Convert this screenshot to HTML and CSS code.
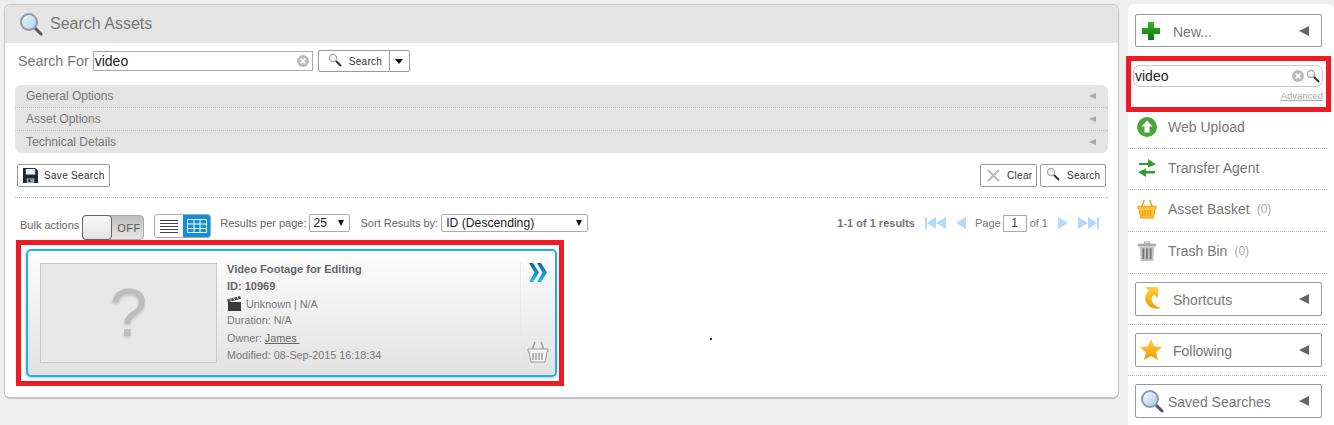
FILE: index.html
```html
<!DOCTYPE html>
<html lang="en">
<head>
    <meta charset="UTF-8">
    <title>Search Assets</title>
    <link rel="stylesheet" href="styles.css">
</head>
<body>
    <svg class="defs" width="0" height="0">
        <defs>
            <linearGradient id="lensFill" x1="0" y1="0" x2="1" y2="1">
                <stop offset="0" stop-color="#f4f9fd"/>
                <stop offset="1" stop-color="#a9cde8"/>
            </linearGradient>
            <linearGradient id="goldFill" x1="0" y1="0" x2="0" y2="1">
                <stop offset="0" stop-color="#ffd23c"/>
                <stop offset="1" stop-color="#f39a06"/>
            </linearGradient>
            <linearGradient id="greenFill" x1="0" y1="0" x2="0" y2="1">
                <stop offset="0" stop-color="#39b02d"/>
                <stop offset="1" stop-color="#087a08"/>
            </linearGradient>
            <linearGradient id="blueFill" x1="0" y1="0" x2="0" y2="1">
                <stop offset="0" stop-color="#0b62a8"/>
                <stop offset="1" stop-color="#21bdf0"/>
            </linearGradient>
            <symbol id="lens" viewBox="0 0 24 24">
                <path d="M15 15l7 7" stroke="#555" stroke-width="3" stroke-linecap="round"/>
                <circle cx="10" cy="10" r="8" fill="url(#lensFill)" stroke="#8c9aa6" stroke-width="2"/>
            </symbol>
            <symbol id="lens-small" viewBox="0 0 14 14">
                <circle cx="5" cy="5" r="3.6" fill="#f3f3f3" stroke="#aaa" stroke-width="1.2"/>
                <path d="M8 8l5 5" stroke="#333" stroke-width="2"/>
            </symbol>
            <symbol id="clear-dot" viewBox="0 0 12 12">
                <circle cx="6" cy="6" r="6" fill="#bbb"/>
                <path d="M3.6 3.6l4.8 4.8M8.4 3.6l-4.8 4.8" stroke="#fff" stroke-width="1.7"/>
            </symbol>
            <symbol id="basket" viewBox="0 0 22 22">
                <path d="M5 9L8 1M17 9L14 1" fill="none" stroke="currentColor" stroke-width="1.5"/>
                <path d="M1 8h20v2.500h-1l-2 10.500H4L2 10.500H1z" fill="var(--basket-fill)" stroke="currentColor" stroke-width="1"/>
                <path d="M6 12v7M9 12v7M12 12v7M15 12v7" stroke="currentColor" stroke-width="1.4" fill="none"/>
            </symbol>
        </defs>
    </svg>

    <div class="page">
        <main class="panel">
            <div class="panel-title">
                <svg class="title-icon"><use href="#lens"/></svg>
                <h1>Search Assets</h1>
            </div>

            <div class="search-row">
                <label class="search-label">Search For</label>
                <div class="search-input">
                    <span>video</span>
                    <svg class="clear-dot"><use href="#clear-dot"/></svg>
                </div>
                <div class="split-button">
                    <span class="button search-main"><svg class="small-lens"><use href="#lens-small"/></svg>Search</span>
                    <span class="button split-arrow"></span>
                </div>
            </div>

            <div class="options">
                <div class="option-row">General Options<i class="option-arrow"></i></div>
                <div class="option-row">Asset Options<i class="option-arrow"></i></div>
                <div class="option-row">Technical Details<i class="option-arrow"></i></div>
            </div>

            <div class="actions-row">
                <span class="button save-button">
                    <svg class="save-icon" viewBox="0 0 16 16">
                        <path d="M0 0h13l3 3v13H0z" fill="#1d2733"/>
                        <path d="M3 1h10v6H3z" fill="#eef1f4"/>
                        <path d="M4 11h8v5H4z" fill="#9aa2aa"/>
                        <path d="M6 12h2v3H6z" fill="#1d2733"/>
                    </svg>
                    Save Search
                </span>
                <div class="actions-right">
                    <span class="button clear-button">
                        <svg class="clear-x" viewBox="0 0 13 13"><path d="M1 1l11 11M12 1L1 12" stroke="#bbb" stroke-width="2.200"/></svg>
                        Clear
                    </span>
                    <span class="button search-small"><svg class="small-lens"><use href="#lens-small"/></svg>Search</span>
                </div>
            </div>

            <div class="toolbar">
                <span class="bulk-label">Bulk actions</span>
                <div class="toggle"><span class="toggle-knob"></span><span class="toggle-text">OFF</span></div>
                <div class="view-switch">
                    <span class="view-list">
                        <svg width="18" height="13" viewBox="0 0 18 13"><path d="M0 .5h18M0 3.500h18M0 6.500h18M0 9.500h18M0 12.500h18" stroke="#444"/></svg>
                    </span>
                    <span class="view-grid">
                        <svg width="20" height="14" viewBox="0 0 20 14"><path d="M.5.5h19v13H.5zM.5 5h19M.5 9.500h19M7 .5v13M13 .5v13" fill="none" stroke="#fff"/></svg>
                    </span>
                </div>
                <span class="tool-label per-page">Results per page:</span>
                <div class="select select-small">25<i class="select-arrow"></i></div>
                <span class="tool-label sort-by">Sort Results by:</span>
                <div class="select select-wide">ID (Descending)<i class="select-arrow"></i></div>

                <div class="pager">
                    <b class="pager-count">1-1 of 1 results</b>
                    <svg class="pager-jump" viewBox="0 0 21 12"><path d="M0 0h2v12H0zM2 6l9-6v12zM11 6l10-6v12z" fill="#b2d9fb"/></svg>
                    <svg class="pager-step pager-prev" viewBox="0 0 10 12"><path d="M0 6l10-6v12z" fill="#b2d9fb"/></svg>
                    <span class="pager-text">Page</span>
                    <span class="pager-box">1</span>
                    <span class="pager-text">of 1</span>
                    <svg class="pager-step" viewBox="0 0 10 12"><path d="M10 6L0 0v12z" fill="#b2d9fb"/></svg>
                    <svg class="pager-jump" viewBox="0 0 21 12"><path d="M21 0h-2v12h2zM19 6l-9-6v12zM10 6L0 0v12z" fill="#b2d9fb"/></svg>
                </div>
            </div>

            <div class="results">
                <div class="marked">
                    <article class="asset-card">
                        <div class="asset-thumb">?</div>
                        <div class="asset-info">
                            <b class="asset-title">Video Footage for Editing</b>
                            <b class="asset-id">ID: 10969</b>
                            <div class="asset-type">
                                <svg class="clapper" viewBox="0 0 15 15">
                                    <path d="M1 6h13v9H1z" fill="#3a3a3a"/>
                                    <path d="M0 3.500L13 0l1 2.800L1 6.300z" fill="#4a4a4a"/>
                                    <path d="M3 3l1.500 2.500M6.500 2l1.500 2.500M10 1l1.500 2.500" stroke="#ddd"/>
                                </svg>
                                Unknown | N/A
                            </div>
                            <div class="asset-line duration">Duration: N/A</div>
                            <div class="asset-line owner">Owner: <a class="owner-link">James&nbsp;</a></div>
                            <div class="asset-line">Modified: 08-Sep-2015 16:18:34</div>
                        </div>
                        <div class="asset-side">
                            <svg class="chevrons" viewBox="0 0 18 19">
                                <path d="M0 0h4l6 9.500L4 19H0l5.500-9.500z" fill="url(#blueFill)"/>
                                <path d="M8 0h4l6 9.500L12 19H8l5.500-9.500z" fill="url(#blueFill)"/>
                            </svg>
                            <svg class="card-basket"><use href="#basket"/></svg>
                        </div>
                    </article>
                </div>
                <i class="stray-dot"></i>
            </div>
        </main>

        <aside class="sidebar">
            <div class="side-button first">
                <svg class="side-icon" viewBox="0 0 20 20"><path d="M7 1h6v6h6v6h-6v6H7v-6H1V7h6z" fill="url(#greenFill)"/></svg>
                <span class="side-label">New...</span>
                <i class="side-arrow"></i>
            </div>

            <div class="quick-search">
                <div class="quick-input">
                    <span>video</span>
                    <svg class="clear-dot"><use href="#clear-dot"/></svg>
                    <svg class="quick-lens"><use href="#lens-small"/></svg>
                </div>
                <a class="advanced">Advanced</a>
            </div>

            <div class="side-link link-upload">
                <svg class="link-icon" viewBox="0 0 20 20">
                    <circle cx="10" cy="10" r="10" fill="#4aa53a"/>
                    <path d="M10 3.500l5.500 6H12.500v6h-5v-6H4.500z" fill="#fff"/>
                </svg>
                Web Upload
            </div>
            <div class="side-link link-transfer">
                <svg class="link-icon" viewBox="0 0 20 18">
                    <path d="M2 4h9V0l8 5.500-8 3V6H2z" fill="#2f9e2f"/>
                    <path d="M18 12H9V9.500L1 13l8 5v-3.500h9z" fill="#2f9e2f"/>
                </svg>
                Transfer Agent
            </div>
            <div class="side-link link-basket">
                <svg class="link-icon gold-basket"><use href="#basket"/></svg>
                Asset Basket <span class="count">(0)</span>
            </div>
            <div class="side-link link-trash">
                <svg class="link-icon" viewBox="0 0 20 22">
                    <path d="M7 1h6v2H7z" fill="none" stroke="#999"/>
                    <path d="M0 3h20v3H0z" fill="#aaa"/>
                    <path d="M2 6h16l-1 16H3z" fill="#c4c4c4"/>
                    <path d="M6 8v12M10 8v12M14 8v12" stroke="#777" stroke-width="2"/>
                </svg>
                Trash Bin <span class="count">(0)</span>
            </div>

            <div class="side-block">
                <div class="side-button">
                    <svg class="side-icon shortcut-icon" viewBox="0 0 18 22">
                        <path d="M2 0H15V11L11 8C8 10 8 13 10 16C12 19 15 20 18 21C11 23 5 20 3 15C1 10 3 6 6 4Z" fill="url(#goldFill)"/>
                    </svg>
                    <span class="side-label">Shortcuts</span>
                    <i class="side-arrow"></i>
                </div>
            </div>
            <div class="side-block">
                <div class="side-button">
                    <svg class="side-icon star-icon" viewBox="0 0 22 21"><path d="M11 0l3.200 7.300 7.800.7-5.900 5.200 1.800 7.800L11 16.900 4.100 21l1.800-7.800L0 8l7.800-.7z" fill="url(#goldFill)"/></svg>
                    <span class="side-label">Following</span>
                    <i class="side-arrow"></i>
                </div>
            </div>
            <div class="side-block last">
                <div class="side-button">
                    <svg class="side-icon saved-icon"><use href="#lens"/></svg>
                    <span class="side-label saved-label">Saved Searches</span>
                    <i class="side-arrow"></i>
                </div>
            </div>
        </aside>
    </div>
</body>
</html>
```

FILE: styles.css
```css
* {
    margin: 0;
    padding: 0;
    box-sizing: border-box;
}

html, body {
    height: 425px;
    overflow: hidden;
}

body {
    font-family: "Liberation Sans", Arial, sans-serif;
    background-color: #eeeeee;
    color: #777;
    font-size: 12px;
}

.defs {
    position: absolute;
}

.page {
    display: flex;
    align-items: flex-start;
    padding-top: 4px;
}

/* main panel */
.panel {
    position: relative;
    width: 1115px;
    height: 395px;
    margin-left: 4px;
    background: #fff;
    border: 1px solid #c4c4c4;
    border-bottom-width: 2px;
    border-radius: 6px;
}

.panel-title {
    display: flex;
    align-items: center;
    height: 38px;
    padding-left: 14px;
    background: #e4e4e4;
    border-radius: 5px 5px 0 0;
}

.title-icon {
    width: 24px;
    height: 24px;
    margin-right: 7px;
}

.panel-title h1 {
    font-size: 16px;
    font-weight: normal;
    color: #777;
}

.search-row {
    display: flex;
    align-items: center;
    height: 22px;
    margin-top: 7px;
    padding-left: 13px;
}

.search-label {
    font-size: 14.300px;
    color: #777;
    margin-right: 4px;
}

.search-input {
    display: flex;
    align-items: center;
    justify-content: space-between;
    width: 220px;
    height: 20px;
    padding: 0 3px 0 1px;
    border: 1px solid #aaa;
    font-size: 14px;
    color: #222;
}

.clear-dot {
    width: 12px;
    height: 12px;
}

.button {
    display: flex;
    align-items: center;
    background: #fff;
    border: 1px solid #999;
    border-radius: 2px;
    font-size: 10px;
    letter-spacing: 0.3px;
    color: #333;
}

.split-button {
    display: flex;
    margin-left: 5px;
    height: 22px;
}

.search-main {
    width: 72px;
    padding-left: 9px;
    border-radius: 2px 0 0 2px;
}

.small-lens {
    width: 14px;
    height: 14px;
    margin-right: 7px;
    margin-top: -3px;
}

.split-arrow {
    justify-content: center;
    width: 20px;
    border-left: 0;
    border-radius: 0 2px 2px 0;
}

.split-arrow::after {
    content: "";
    border-top: 5px solid #111;
    border-left: 4px solid transparent;
    border-right: 4px solid transparent;
}

.options {
    margin: 13px 10px 0;
    background: #e4e4e4;
    border-radius: 6px;
}

.option-row {
    display: flex;
    align-items: center;
    justify-content: space-between;
    height: 23px;
    padding: 0 12px 0 11px;
    font-size: 12px;
    color: #777;
    border-bottom: 1px dotted #bbb;
}

.option-row:last-child {
    height: 22px;
    border-bottom: 0;
}

.option-arrow {
    border-right: 7px solid #aaa;
    border-top: 3.500px solid transparent;
    border-bottom: 3.500px solid transparent;
}

.actions-row {
    display: flex;
    justify-content: space-between;
    height: 33px;
    margin: 11px 10px 0 12px;
    padding-right: 2px;
}

.actions-row .button {
    height: 23px;
}

.save-button {
    width: 93px;
    padding-left: 5px;
}

.save-icon {
    width: 15px;
    height: 15px;
    margin-right: 6px;
}

.actions-right {
    display: flex;
    gap: 3px;
}

.clear-button {
    width: 57px;
    padding-left: 6px;
}

.clear-x {
    width: 13px;
    height: 13px;
    margin-right: 7px;
}

.search-small {
    width: 66px;
    padding-left: 5px;
}

.toolbar {
    position: relative;
    display: flex;
    align-items: flex-start;
    margin: 0 10px;
    padding: 16px 0 0 5px;
    height: 43px;
    border-top: 1px dotted #bbb;
}

.bulk-label {
    margin-top: 5px;
    font-size: 11px;
    color: #666;
    margin-right: 3px;
}

.toggle {
    display: flex;
    width: 62px;
    height: 25px;
    margin-top: 1px;
    background: linear-gradient(#bdbdbd, #e6e6e6);
    border: 1px solid #aaa;
    border-radius: 4px;
}

.toggle-knob {
    width: 30px;
    margin: -1px 0 -1px -1px;
    background: linear-gradient(#f8f8f8, #e4e4e4);
    border: 1px solid #666;
    border-radius: 4px;
}

.toggle-text {
    margin: 6px 0 0 5px;
    font-size: 11px;
    letter-spacing: 0.4px;
    color: #555;
}

.view-switch {
    display: flex;
    width: 57px;
    height: 24px;
    margin-left: 10px;
    border: 1px solid #aaa;
    border-radius: 3px;
    overflow: hidden;
}

.view-list, .view-grid {
    display: flex;
    align-items: center;
    justify-content: center;
    width: 28px;
}

.view-grid {
    flex: 1;
    background: #0e8fe0;
}

.tool-label {
    margin-top: 3px;
    font-size: 11px;
    color: #666;
}

.per-page {
    margin-left: 9px;
}

.sort-by {
    margin-left: 11px;
}

.select {
    position: relative;
    height: 18px;
    padding: 1px 0 0 4px;
    margin-left: 2px;
    background: #fff;
    border: 1px solid #aaa;
    border-radius: 2px;
    font-size: 12.200px;
    line-height: 15px;
    color: #222;
}

.select-small {
    width: 41px;
}

.select-wide {
    width: 147px;
    margin-left: 3px;
}

.select-arrow {
    position: absolute;
    right: 5px;
    top: 5px;
    border-top: 6px solid #111;
    border-left: 3.500px solid transparent;
    border-right: 3.500px solid transparent;
}

.pager {
    display: flex;
    align-items: center;
    margin-left: auto;
    margin-right: 9px;
    height: 18px;
    font-size: 11px;
    color: #777;
}

.pager-count {
    margin-right: 10px;
}

.pager-jump {
    width: 21px;
    height: 12px;
}

.pager-step {
    width: 10px;
    height: 12px;
    margin: 0 10px;
}

.pager-prev {
    margin-right: 9px;
}

.pager-box {
    width: 24px;
    height: 17px;
    margin: 0 3px 0 2px;
    border: 1px solid #aaa;
    text-align: center;
    font-size: 12px;
    line-height: 15px;
    color: #444;
}

/* result card, with the red marker around it */
.results {
    margin-left: 11px;
    position: relative;
}

.marked {
    width: 548px;
    height: 146px;
    padding: 4px 2px 4px 5px;
    border: 5px solid #ed1c24;
}

.asset-card {
    display: flex;
    width: 531px;
    height: 128px;
    padding: 12px 6px 12px 12px;
    background: linear-gradient(#fdfdfd, #e2e2e2);
    border: 2px solid #1db2e6;
    border-radius: 5px;
    box-shadow: 0 1px 3px rgba(0, 0, 0, 0.25);
}

.asset-thumb {
    width: 177px;
    height: 100px;
    background: #e8e8e8;
    border: 1px solid #c8c8c8;
    text-align: center;
    font-size: 68px;
    line-height: 96px;
    color: #bdbdbd;
    text-shadow: 0 2px 3px rgba(0, 0, 0, 0.15);
}

.asset-info {
    flex: 1;
    padding-left: 10px;
    font-size: 10.800px;
    color: #777;
}

.asset-title, .asset-id {
    display: block;
    color: #666;
}

.asset-title {
    font-size: 11.100px;
}

.asset-id {
    margin-top: 5px;
    font-size: 11px;
}

.asset-type {
    display: flex;
    align-items: center;
    margin-top: 4px;
    height: 15px;
}

.clapper {
    width: 15px;
    height: 15px;
    margin-right: 4px;
}

.asset-line {
    margin-top: 5px;
}

.asset-line.duration {
    margin-top: 3px;
}

.asset-line.owner {
    margin-top: 6px;
}

.owner-link {
    text-decoration: underline;
    color: #666;
}

.asset-side {
    display: flex;
    flex-direction: column;
    align-items: center;
    justify-content: space-between;
    width: 29px;
    height: 100px;
    padding-left: 6px;
    border-left: 1px solid #e9e9e9;
}

.chevrons {
    width: 18px;
    height: 19px;
}

.card-basket {
    width: 22px;
    height: 22px;
    color: #999;
    --basket-fill: #f6f6f6;
}

.stray-dot {
    position: absolute;
    left: 694px;
    top: 98px;
    width: 2px;
    height: 2px;
    background: #333;
}

/* sidebar */
.sidebar {
    width: 206px;
    height: 421px;
    margin-left: 9px;
    padding-top: 10px;
    background: #fff;
    border-radius: 6px 6px 0 0;
}

.side-button {
    position: relative;
    display: flex;
    align-items: center;
    width: 187px;
    height: 33px;
    margin-left: 7px;
    background: #fff;
    border: 1px solid #999;
    border-radius: 2px;
    font-size: 14px;
    color: #777;
}

.side-block .side-button {
    height: 34px;
}

.side-icon {
    position: absolute;
    left: 5px;
    top: 6px;
    width: 20px;
    height: 20px;
}

.side-label {
    margin-left: 37px;
    padding-top: 2px;
}

.side-arrow {
    position: absolute;
    right: 12px;
    top: 11px;
    border-right: 10px solid #666;
    border-top: 5px solid transparent;
    border-bottom: 5px solid transparent;
}

.shortcut-icon {
    left: 7px;
    top: 4px;
    width: 18px;
    height: 22px;
}

.star-icon {
    left: 4px;
    top: 5px;
    width: 22px;
    height: 21px;
}

.saved-icon {
    left: 4px;
    top: 4px;
    width: 24px;
    height: 24px;
}

.saved-label {
    margin-left: 32px;
}

.quick-search {
    width: 205px;
    height: 56px;
    margin: 9px 0 0 -2px;
    padding: 4px 3px 0 2px;
    border: 5px solid #ed1c24;
}

.quick-input {
    display: flex;
    align-items: center;
    height: 22px;
    padding: 0 2px 0 1px;
    background: #fff;
    border: 1px solid #c8c8c8;
    border-radius: 7px;
    font-size: 14px;
    color: #222;
}

.quick-input span {
    flex: 1;
}

.quick-lens {
    width: 14px;
    height: 14px;
    margin-left: 2px;
}

.advanced {
    display: block;
    margin-top: 3px;
    text-align: right;
    font-size: 9.500px;
    text-decoration: underline;
    color: #aaa;
}

.side-link {
    display: flex;
    align-items: center;
    width: 199px;
    padding-left: 9px;
    border-bottom: 1px dotted #bbb;
    font-size: 14px;
    color: #777;
}

.link-upload {
    height: 37px;
    padding-bottom: 6px;
}

.link-transfer {
    height: 41px;
    padding-bottom: 2px;
}

.link-basket {
    height: 42px;
    padding-bottom: 4px;
}

.link-trash {
    height: 42px;
    padding-bottom: 4px;
}

.link-icon {
    width: 20px;
    height: 20px;
    margin-right: 11px;
}

.gold-basket {
    color: #e89a10;
    --basket-fill: #ffc63a;
}

.count {
    margin-left: 7px;
    font-size: 12px;
    color: #aaa;
}

.side-block {
    width: 199px;
    height: 51px;
    padding-top: 8px;
    border-bottom: 1px dotted #bbb;
}

.side-block.last {
    border-bottom: 0;
}
```
